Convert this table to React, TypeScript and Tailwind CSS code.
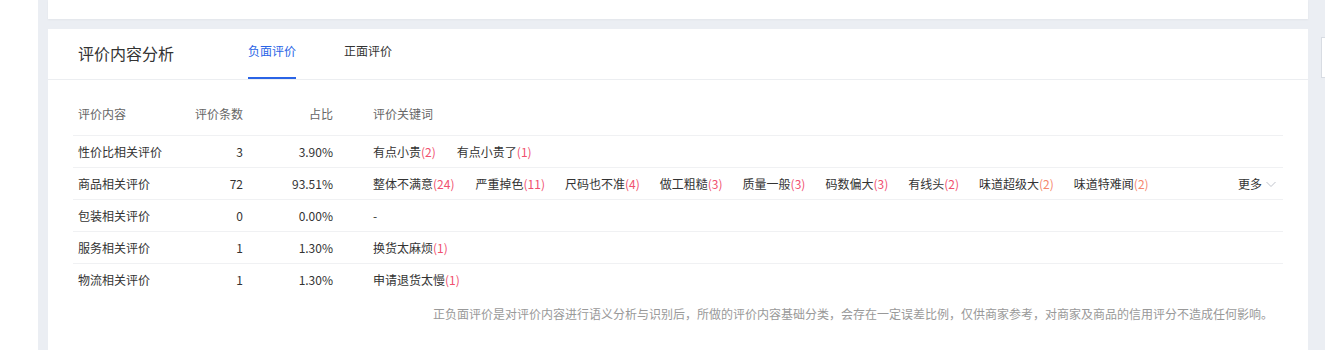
import React from "react";

const rows = [
  { name: "性价比相关评价", count: 3, ratio: "3.90%", keywords: [["有点小贵", 2], ["有点小贵了", 1]] },
  {
    name: "商品相关评价",
    count: 72,
    ratio: "93.51%",
    keywords: [
      ["整体不满意", 24],
      ["严重掉色", 11],
      ["尺码也不准", 4],
      ["做工粗糙", 3],
      ["质量一般", 3],
      ["码数偏大", 3],
      ["有线头", 2],
      ["味道超级大", 2],
      ["味道特难闻", 2],
    ],
    more: true,
  },
  { name: "包装相关评价", count: 0, ratio: "0.00%", keywords: [] },
  { name: "服务相关评价", count: 1, ratio: "1.30%", keywords: [["换货太麻烦", 1]] },
  { name: "物流相关评价", count: 1, ratio: "1.30%", keywords: [["申请退货太慢", 1]] },
] as { name: string; count: number; ratio: string; keywords: [string, number][]; more?: boolean }[];

export default function App() {
  return (
    <div
      className="flex h-[350px] w-[1325px] overflow-hidden bg-white text-[12px] text-[#333]"
      style={{ fontFamily: '"Noto Sans CJK SC", "Noto Sans", sans-serif' }}
    >
      <div className="w-[38px] shrink-0 bg-white" />
      <div className="flex flex-1 bg-[#ebeef3]">
        <div className="ml-[10px] flex w-[1260px] flex-col gap-[10px]">
          {/* previous card bottom */}
          <div className="h-[19px] bg-white shadow-[0_1px_2px_rgba(0,0,0,0.04)]" />

          {/* evaluation analysis card */}
          <div className="flex-1 bg-white">
            <div className="flex h-[51px] items-stretch border-b border-[#eceef1] pl-[30px]">
              <div className="flex items-center pb-[2px] text-[16px] text-[#333]">评价内容分析</div>
              <div className="ml-[74px] flex items-center border-b-[2px] border-[#2a64e6] pb-[4px] text-[#2a64e6]">
                负面评价
              </div>
              <div className="ml-[48px] flex items-center pb-[6px] text-[#333]">正面评价</div>
            </div>

            <div className="px-[25px]">
              <div className="flex h-[56px] items-center border-b border-[#f0f1f3] pt-[12px] text-[#666]">
                <div className="w-[115px] pl-[5px]">评价内容</div>
                <div className="w-[55px] text-right">评价条数</div>
                <div className="w-[90px] text-right">占比</div>
                <div className="pl-[40px]">评价关键词</div>
              </div>
              {rows.map((r, ri) => (
                <div
                  key={r.name}
                  className={
                    ri < rows.length - 1
                      ? "flex h-[32px] items-center border-b border-[#f0f1f3]"
                      : "flex h-[32px] items-center"
                  }
                >
                  <div className="w-[115px] pl-[5px]">{r.name}</div>
                  <div className="w-[55px] text-right">{r.count}</div>
                  <div className="w-[90px] text-right">{r.ratio}</div>
                  <div className="flex flex-1 items-center pl-[40px]">
                    {r.keywords.length === 0 && <span>-</span>}
                    {r.keywords.map(([k, n], i) => (
                      <span key={k} className={i === 0 ? "mr-[21px]" : "mr-[20px]"}>
                        {k}
                        <span className={i >= 7 ? "text-[#f5866c]" : "text-[#f0506e]"}>({n})</span>
                      </span>
                    ))}
                    {r.more && (
                      <span className="ml-auto mr-[6px] flex items-center gap-[3px]">
                        更多
                        <svg width="12" height="12" viewBox="0 0 12 12" fill="none">
                          <path d="M1.5 4l4.5 4.5L10.5 4" stroke="#c0c4cc" strokeWidth="1" />
                        </svg>
                      </span>
                    )}
                  </div>
                </div>
              ))}
              <div className="pr-[10px] pt-[9px] text-right text-[#999]">
                正负面评价是对评价内容进行语义分析与识别后，所做的评价内容基础分类，会存在一定误差比例，仅供商家参考，对商家及商品的信用评分不造成任何影响。
              </div>
            </div>
          </div>
        </div>
        <div className="ml-auto mt-[37px] h-[41px] w-[4px] border-y border-l border-[#d8dce3] bg-white" />
      </div>
    </div>
  );
}
